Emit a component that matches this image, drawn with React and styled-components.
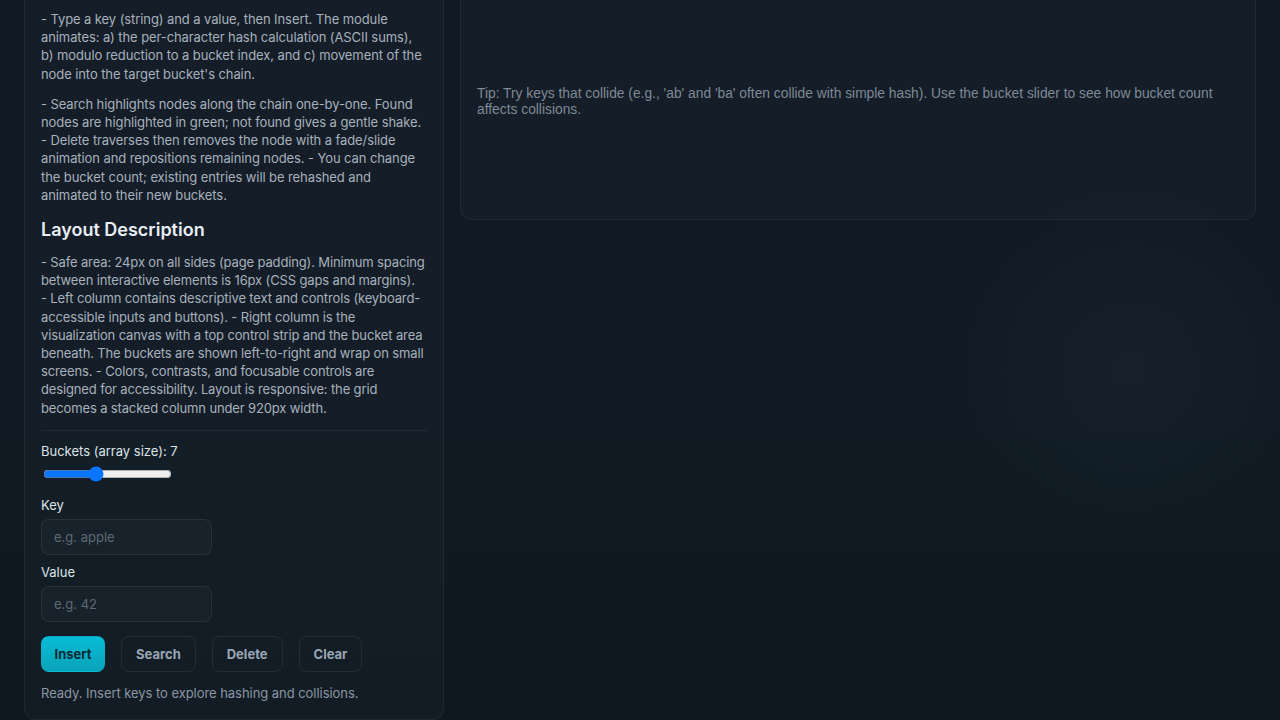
import React from "react";
import styled, { createGlobalStyle } from "styled-components";

const GlobalStyle = createGlobalStyle`
  html, body {
    margin: 0;
    padding: 0;
  }
  body {
    min-height: 720px;
    font-family: Inter, "Noto Sans", sans-serif;
    background:
      radial-gradient(circle at 1130px 370px, rgba(28, 40, 54, 0.45), transparent 180px),
      linear-gradient(to bottom, #111a24 0, #111a24 436px, #0f1a22 436px, #0f1820 720px);
    color: #dce3ea;
  }
`;

const Page = styled.div`
  display: grid;
  grid-template-columns: 420px 1fr;
  gap: 16px;
  align-items: start;
  padding: 0 24px;
`;

const Card = styled.section`
  background: rgba(255, 255, 255, 0.018);
  border: 1px solid rgba(255, 255, 255, 0.055);
  border-top: none;
  border-radius: 0 0 12px 12px;
  padding: ${(p) => p.$pad || "10px 16px 17px"};
  box-sizing: border-box;
`;

const Text = styled.p`
  margin: 0 0 ${(p) => p.$mb || "12px"};
  font-size: 13px;
  line-height: 18.2px;
  letter-spacing: ${(p) => p.$ls || "-0.09px"};
  color: #a7b1bd;
`;

const NoWrap = styled.span`
  white-space: nowrap;
`;

const Heading = styled.h2`
  margin: 15px 0 12px;
  font-size: 18px;
  line-height: 22px;
  font-weight: 600;
  color: #e8eef4;
`;

const Divider = styled.hr`
  border: none;
  border-top: 1px solid rgba(255, 255, 255, 0.06);
  margin: 13px 0 11px;
`;

const Field = styled.div`
  display: flex;
  flex-direction: column;
  gap: ${(p) => p.$gap || "5px"};
  margin-bottom: ${(p) => p.$mb || "8px"};
`;

const Label = styled.label`
  font-size: 13px;
  line-height: 18px;
  color: #dce3ea;
`;

const Range = styled.input`
  width: 129px;
  margin: 2px 2px;
  accent-color: #0a75ff;
`;

const Input = styled.input`
  width: 171px;
  height: 36px;
  box-sizing: border-box;
  padding: 0 12px;
  border-radius: 8px;
  border: 1px solid rgba(255, 255, 255, 0.07);
  background: rgba(255, 255, 255, 0.025);
  color: #dce3ea;
  font-family: Inter, sans-serif;
  font-size: 13px;
  outline: none;
  &::placeholder {
    color: #5d6976;
  }
`;

const Buttons = styled.div`
  display: flex;
  gap: 16px;
  margin-top: 14px;
`;

const Button = styled.button`
  height: 36px;
  padding: 0 ${(p) => (p.$primary ? "12.5px" : "14px")};
  border-radius: 8px;
  font-family: Inter, sans-serif;
  font-size: 13px;
  font-weight: 700;
  cursor: pointer;
  border: 1px solid ${(p) => (p.$primary ? "transparent" : "rgba(255, 255, 255, 0.07)")};
  background: ${(p) =>
    p.$primary ? "linear-gradient(180deg, #07bcd6, #0aa3b9)" : "transparent"};
  color: ${(p) => (p.$primary ? "#082a33" : "#98a6b5")};
`;

const Status = styled.div`
  margin-top: 12px;
  font-size: 13px;
  line-height: 18px;
  letter-spacing: -0.05px;
  color: #8a96a4;
`;

const Strip = styled.div`
  height: 86px;
`;

const Tip = styled.p`
  margin: 0;
  font-family: "Liberation Sans Narrow", "Liberation Sans", sans-serif;
  font-size: 13.8px;
  line-height: 16px;
  color: #7d8997;
`;

const BucketArea = styled.div`
  height: 101px;
`;

export default function App() {
  return (
    <>
      <GlobalStyle />
      <Page>
        <Card>
          <Text>
            - Type a key (string) and a value, then Insert. The module animates: a) the
            per-character hash calculation (ASCII sums), b) modulo reduction to a bucket
            index, and c) movement of the node into the target bucket's chain.
          </Text>
          <Text>
            - Search highlights nodes along the chain one-by-one. Found nodes are
            highlighted in green; not found gives a gentle shake. - Delete traverses then
            removes the node with a fade/slide animation and repositions remaining nodes.
            - You can change the bucket count; existing entries will be rehashed and
            animated to their new buckets.
          </Text>
          <Heading>Layout Description</Heading>
          <Text $mb="0" $ls="-0.14px">
            - Safe area: 24px on all sides (page padding). Minimum spacing between
            interactive elements is 16px (CSS gaps and margins). <NoWrap>- Left</NoWrap>{" "}
            column contains descriptive text and controls (keyboard-accessible inputs and
            buttons). - Right column is the visualization canvas with a top control strip
            and the bucket area beneath. The buckets are shown left-to-right and wrap on
            small screens. - Colors, contrasts, and focusable controls are designed for
            accessibility. Layout is responsive: the grid becomes a stacked column under
            920px width.
          </Text>
          <Divider />
          <Field $gap="4px" $mb="12px">
            <Label htmlFor="buckets">Buckets (array size): 7</Label>
            <Range id="buckets" type="range" min="3" max="13" defaultValue="7" />
          </Field>
          <Field>
            <Label htmlFor="key">Key</Label>
            <Input id="key" placeholder="e.g. apple" />
          </Field>
          <Field $mb="0">
            <Label htmlFor="value">Value</Label>
            <Input id="value" placeholder="e.g. 42" />
          </Field>
          <Buttons>
            <Button $primary>Insert</Button>
            <Button>Search</Button>
            <Button>Delete</Button>
            <Button>Clear</Button>
          </Buttons>
          <Status>Ready. Insert keys to explore hashing and collisions.</Status>
        </Card>
        <Card $pad="0 16px 0">
          <Strip />
          <Tip>
            Tip: Try keys that collide (e.g., 'ab' and 'ba' often collide with simple
            hash). Use the bucket slider to see how bucket count affects collisions.
          </Tip>
          <BucketArea />
        </Card>
      </Page>
    </>
  );
}
